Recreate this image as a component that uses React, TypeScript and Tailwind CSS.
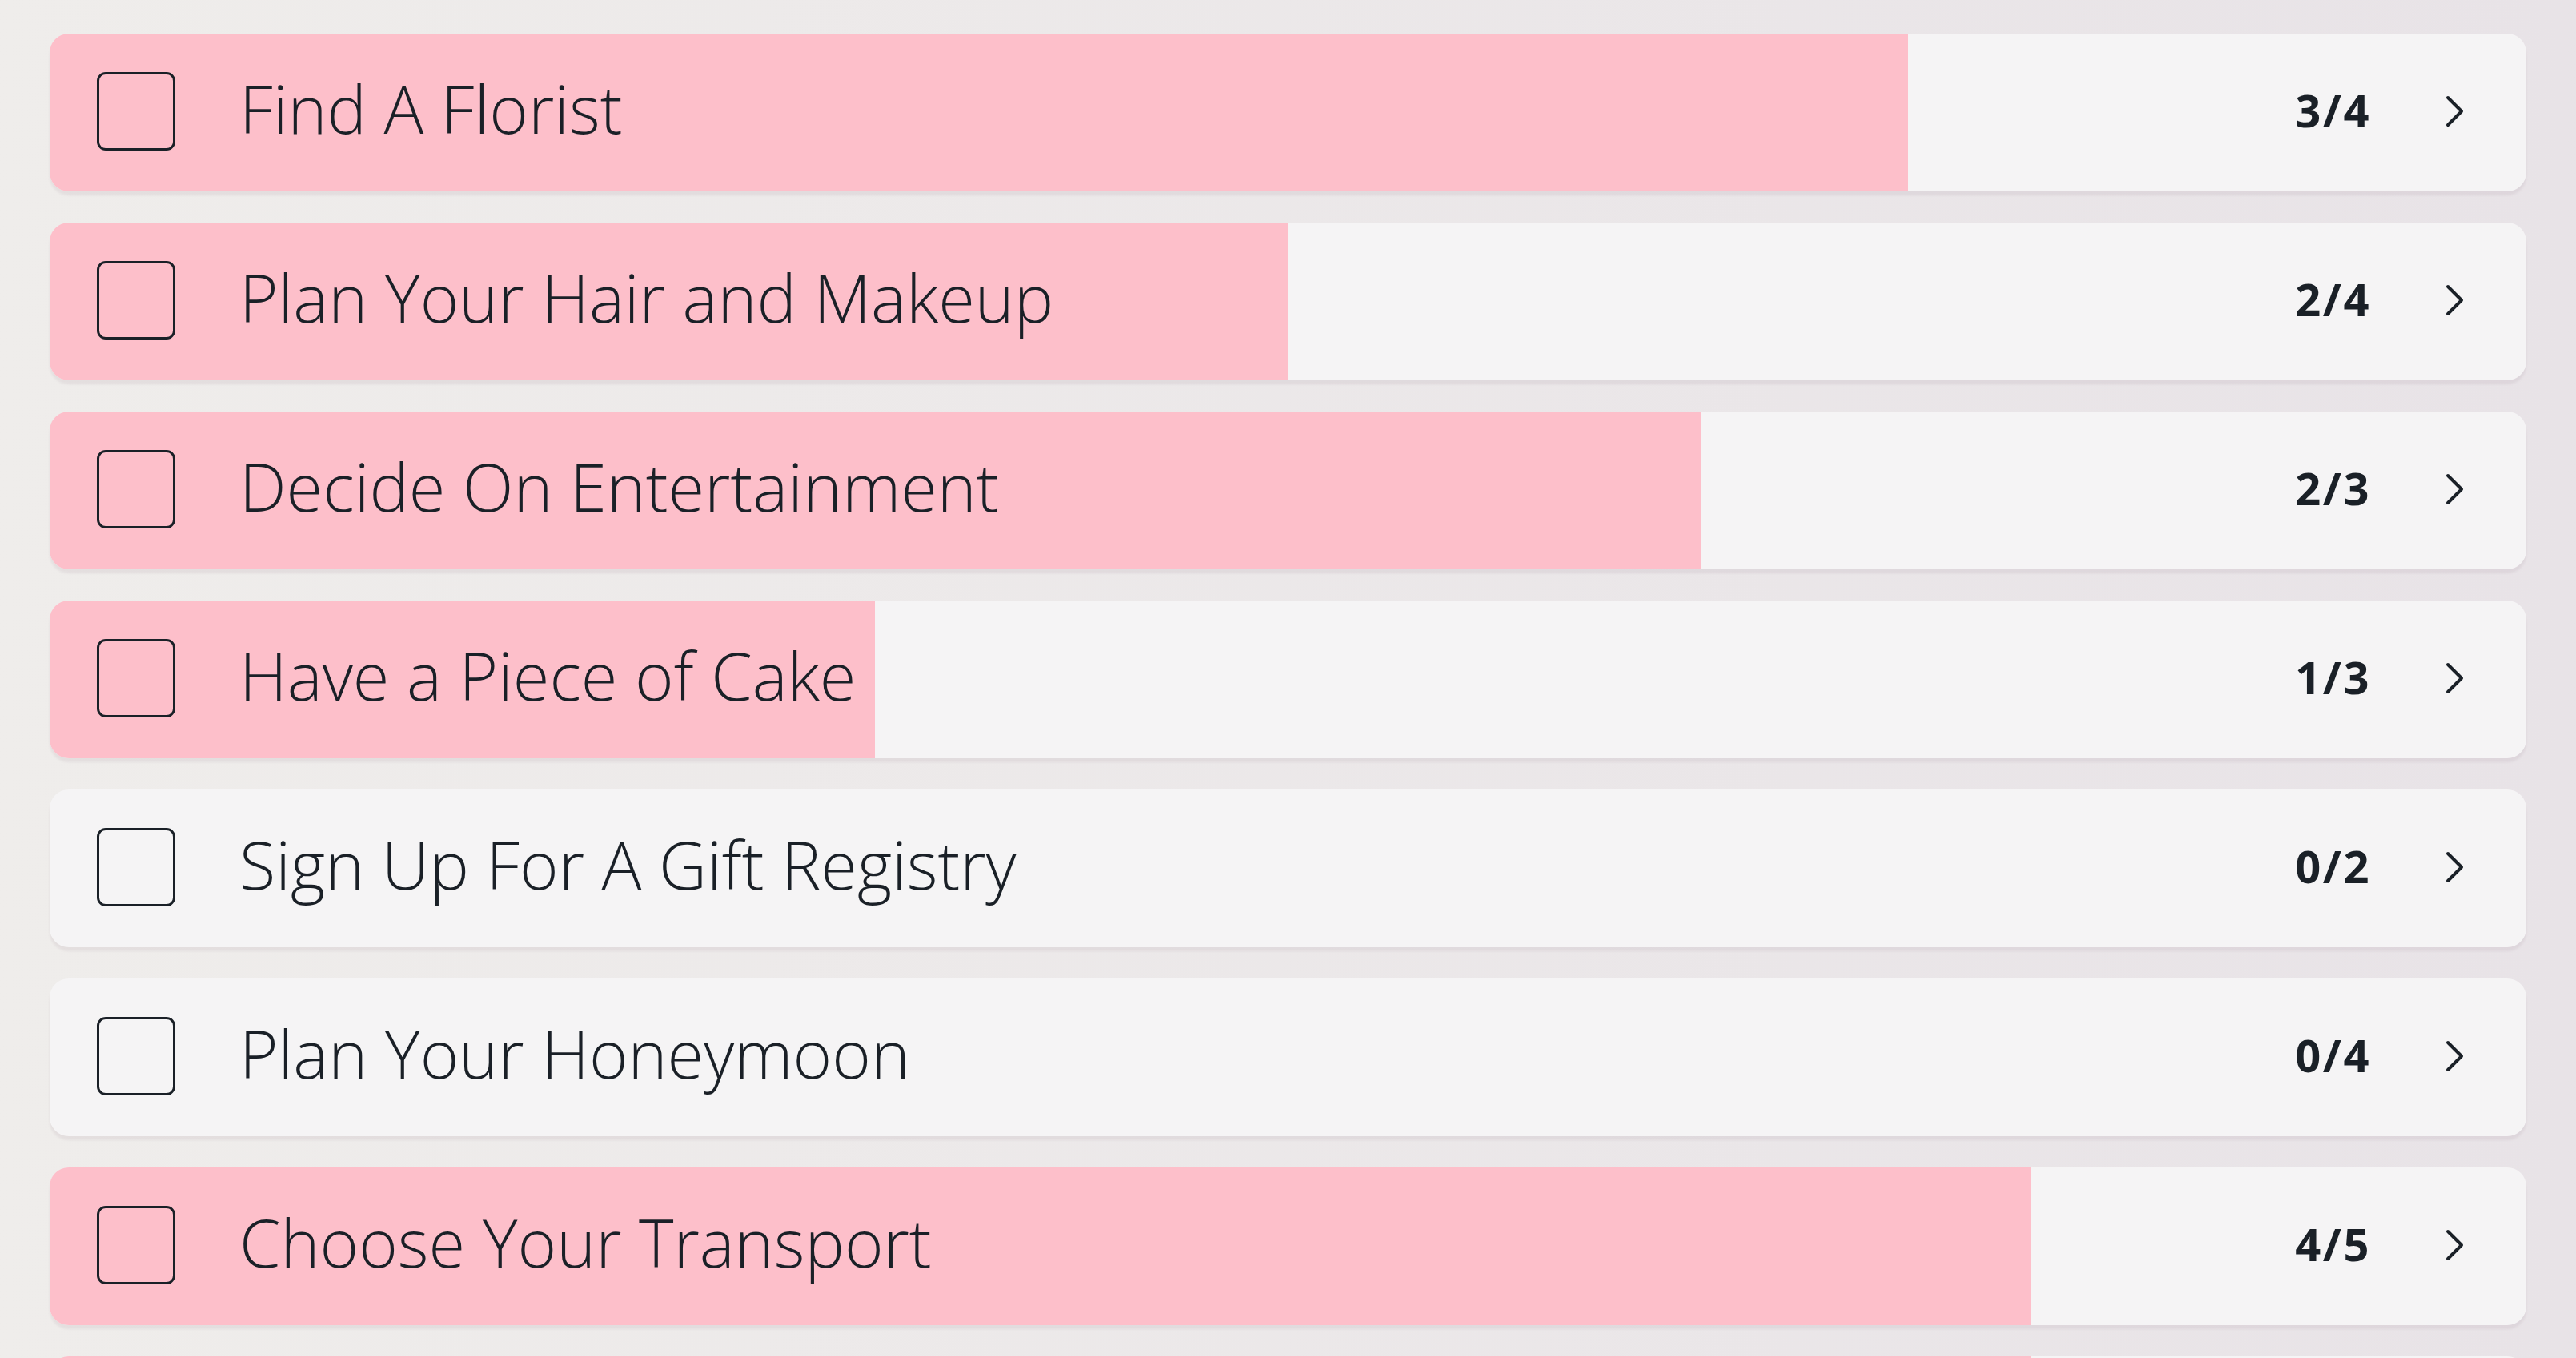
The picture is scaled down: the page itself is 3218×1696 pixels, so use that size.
import React from "react";

type Task = {
  title: string;
  done: number;
  total: number;
};

const tasks: Task[] = [
  { title: "Find A Florist", done: 3, total: 4 },
  { title: "Plan Your Hair and Makeup", done: 2, total: 4 },
  { title: "Decide On Entertainment", done: 2, total: 3 },
  { title: "Have a Piece of Cake", done: 1, total: 3 },
  { title: "Sign Up For A Gift Registry", done: 0, total: 2 },
  { title: "Plan Your Honeymoon", done: 0, total: 4 },
  { title: "Choose Your Transport", done: 4, total: 5 },
];

function Chevron() {
  return (
    <svg width="26" height="40" viewBox="0 0 26 40" fill="none" className="mb-[4px] shrink-0">
      <polyline
        points="4,3 21,20 4,37"
        stroke="#1a2027"
        strokeWidth="4"
        strokeLinecap="round"
        strokeLinejoin="round"
      />
    </svg>
  );
}

function TaskRow({ task }: { task: Task }) {
  const pct = (task.done / task.total) * 100;
  return (
    <div className="relative h-[197px] shrink-0 overflow-hidden rounded-3xl bg-[#f5f4f5] shadow-[0_5px_3px_rgba(120,90,110,0.09)]">
      {/* progress fill */}
      <div className="absolute inset-y-0 left-0 bg-[#fdbfca]" style={{ width: `${pct}%` }} />

      <div className="relative flex h-full items-center pl-[59px] pr-[76px]">
        <div className="mb-[4px] h-[98px] w-[98px] shrink-0 rounded-[11px] border-[3px] border-[#1a2027]" />
        <span className="mb-[10px] ml-[80px] flex-1 whitespace-nowrap text-[83px] font-[350] leading-normal tracking-[0px] text-[#1a2027] [font-family:'Open_Sans',sans-serif]">
          {task.title}
        </span>
        <span className="mb-[8px] mr-[92px] text-[56px] font-bold leading-normal tracking-[2.5px] text-[#1a2027] [font-family:'Open_Sans',sans-serif]">
          {task.done}/{task.total}
        </span>
        <Chevron />
      </div>
    </div>
  );
}

export default function App() {
  return (
    <div className="h-[1696px] w-full overflow-hidden bg-gradient-to-r from-[#efedeb] to-[#e8e3e7]">
      <div className="flex flex-col gap-[39px] px-[62px] pt-[42px]">
        {tasks.map((t) => (
          <TaskRow key={t.title} task={t} />
        ))}
        {/* next row, only its top edge shows */}
        <div className="relative h-[197px] shrink-0 overflow-hidden rounded-3xl bg-[#f5f4f5]">
          <div className="absolute inset-y-0 left-0 w-[80%] bg-[#fdbfca]" />
        </div>
      </div>
    </div>
  );
}
